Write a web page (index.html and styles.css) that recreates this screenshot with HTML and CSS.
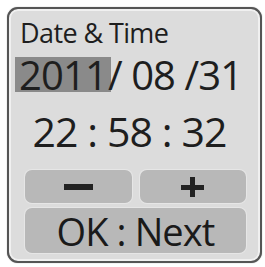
FILE: index.html
```html
<!DOCTYPE html>
<html>
<head>
<meta charset="utf-8">
<link rel="stylesheet" href="styles.css">
</head>
<body>
<div class="device">
  <div class="title">Date &amp; Time</div>
  <div class="date"><span class="sel">2011</span>/ 08 /31</div>
  <div class="time">22 : 58 : 32</div>
  <div class="pm">
    <div class="btn"><span class="minus"></span></div>
    <div class="btn"><span class="plus"></span></div>
  </div>
  <div class="btn ok">OK : Next</div>
</div>
</body>
</html>
```
FILE: styles.css
```css
html, body {
  margin: 0;
  padding: 0;
  background: #ffffff;
}
body {
  width: 265px;
  height: 267px;
  overflow: hidden;
  font-family: "Open Sans", "Noto Sans", sans-serif;
  color: #1e1e1e;
}
.device {
  box-sizing: border-box;
  margin: 7px 0 0 7px;
  width: 255px;
  height: 256px;
  border: 2px solid #555555;
  border-radius: 11px;
  background: #dcdcdc;
  box-shadow: inset 0 0 0 2px #f0f0f0, 0 0 1px #888888;
  display: flex;
  flex-direction: column;
}
.title {
  font-size: 27px;
  line-height: 48px;
  height: 48px;
  padding-left: 11px;
  letter-spacing: -0.6px;
  white-space: nowrap;
}
.date {
  font-size: 40px;
  line-height: 35px;
  height: 35px;
  padding-left: 6px;
  white-space: pre;
  letter-spacing: -0.9px;
}
.sel {
  display: inline-block;
  background: #8a8a8a;
  padding: 0 4px 0 4px;
  margin-right: -3px;
  height: 35px;
}
.time {
  font-size: 41px;
  line-height: 78px;
  height: 78px;
  text-align: center;
  white-space: pre;
  letter-spacing: -0.9px;
  padding-right: 10px;
}
.pm {
  padding: 0 14px 0 16px;
  display: grid;
  grid-template-columns: 1fr 1fr;
  gap: 8px;
}
.btn {
  background: #b8b8b8;
  border-radius: 7px;
  box-shadow: 0 0 0 1px #e6e6e6;
  height: 33px;
  display: flex;
  align-items: center;
  justify-content: center;
}
.minus {
  width: 29px;
  height: 6px;
  background: #222222;
}
.plus {
  position: relative;
  width: 23px;
  height: 20px;
}
.plus::before, .plus::after {
  content: "";
  position: absolute;
  background: #222222;
}
.plus::before {
  left: 0;
  top: 8px;
  width: 23px;
  height: 5px;
}
.plus::after {
  left: 9px;
  top: 0;
  width: 5px;
  height: 20px;
}
.ok {
  margin: 5px 14px 0 16px;
  height: 45px;
  font-size: 38px;
  letter-spacing: -0.9px;
  white-space: pre;
  color: #1a1a1a;
}
```
